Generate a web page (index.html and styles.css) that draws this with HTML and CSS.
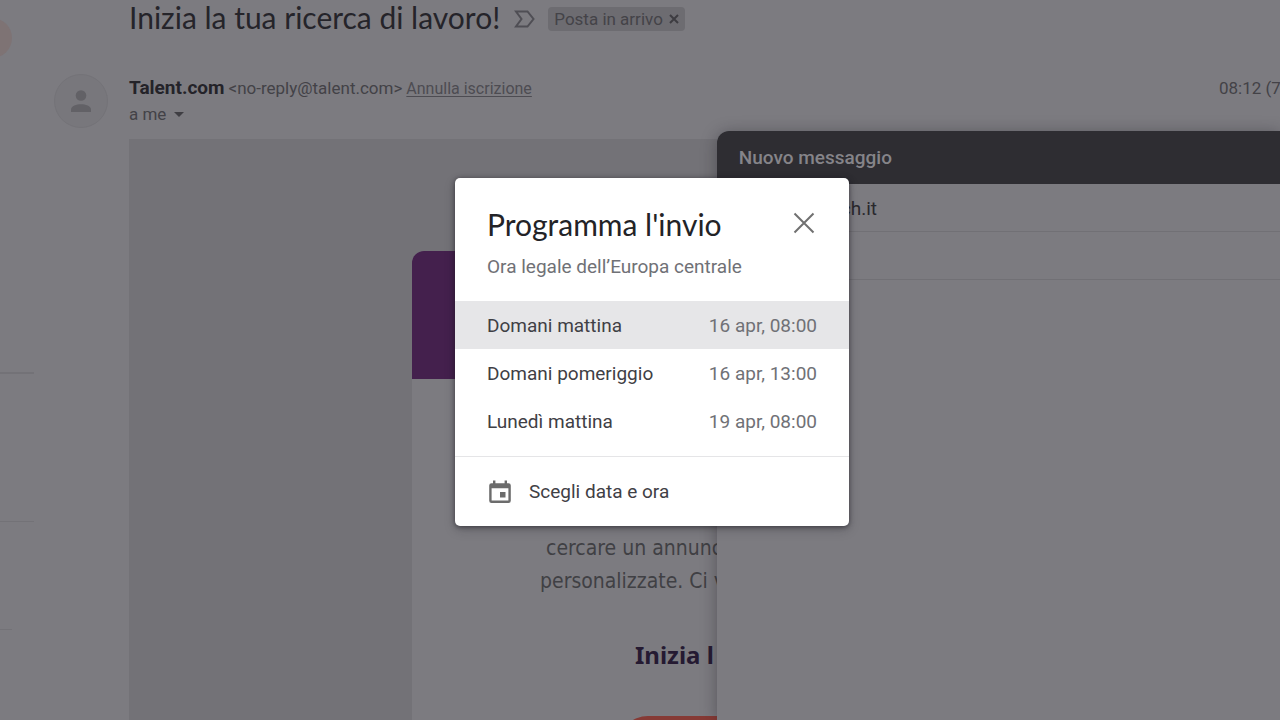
FILE: index.html
```html
<!DOCTYPE html>
<html lang="it">
<head>
<meta charset="utf-8">
<meta name="viewport" content="width=device-width, initial-scale=1">
<title>Inizia la tua ricerca di lavoro!</title>
<link rel="stylesheet" href="styles.css">
</head>
<body>
<div class="app">
  <aside class="rail">
    <span class="rail-dot"></span>
    <span class="rail-line rail-line-first"></span>
    <span class="rail-line rail-line-second"></span>
    <span class="rail-line rail-line-short"></span>
  </aside>
  <main class="thread">
    <header class="subject">
      <h1 class="subject-title">Inizia la tua ricerca di lavoro!</h1>
      <svg class="importance" viewBox="0 0 22 18" aria-hidden="true"><path d="M2 1.5h11.5l6 7.5-6 7.500H2L7.500 9z"/></svg>
      <span class="label">Posta in arrivo
        <button class="label-remove" type="button" aria-label="Rimuovi etichetta"><svg viewBox="0 0 10 10" aria-hidden="true"><path d="M1 1l8 8M9 1l-8 8"/></svg></button>
      </span>
    </header>
    <section class="message">
      <span class="avatar"><svg viewBox="0 0 20 22" aria-hidden="true"><circle cx="10" cy="5.500" r="5.300"/><path d="M0 22v-2.500C0 16 5.500 14.200 10 14.200s10 1.800 10 5.300V22z"/></svg></span>
      <div class="message-head">
        <div class="sender-row">
          <strong class="sender">Talent.com</strong>
          <span class="address">&lt;no-reply@talent.com&gt;</span>
          <a class="unsubscribe" href="#">Annulla iscrizione</a>
        </div>
        <button class="recipient" type="button">a me <svg viewBox="0 0 10 5" aria-hidden="true"><path d="M0 0h10L5 5z"/></svg></button>
      </div>
      <time class="sent">08:12 (7</time>
    </section>
    <article class="mail">
      <div class="mail-card">
        <div class="mail-banner"></div>
        <div class="mail-copy">
          <p class="mail-line">cercare un annuncio</p>
          <p class="mail-line mail-line-wide">personalizzate. Ci v</p>
          <h2 class="mail-heading">Inizia l</h2>
          <div class="mail-action"></div>
        </div>
      </div>
    </article>
  </main>
  <section class="compose" aria-label="Nuovo messaggio">
    <header class="compose-bar">Nuovo messaggio</header>
    <div class="compose-row compose-to">ch.it</div>
    <div class="compose-row"></div>
  </section>
  <div class="overlay">
    <section class="dialog" role="dialog" aria-labelledby="dialog-title">
      <header class="dialog-head">
        <div class="dialog-titles">
          <h2 class="dialog-title" id="dialog-title">Programma l'invio</h2>
          <p class="dialog-zone">Ora legale dell’Europa centrale</p>
        </div>
        <button class="close" type="button" aria-label="Chiudi"><svg viewBox="0 0 22 22" aria-hidden="true"><path d="M1.500 1.500l19 19M20.500 1.500l-19 19"/></svg></button>
      </header>
      <div class="options">
        <button class="option option-active" type="button"><span>Domani mattina</span><span class="when">16 apr, 08:00</span></button>
        <button class="option" type="button"><span>Domani pomeriggio</span><span class="when">16 apr, 13:00</span></button>
        <button class="option" type="button"><span>Lunedì mattina</span><span class="when">19 apr, 08:00</span></button>
      </div>
      <button class="pick" type="button">
        <svg viewBox="0 0 22 24" aria-hidden="true"><path fill-rule="evenodd" d="M4 0.500h2.400v2.700h9.200V0.500H18v2.700h1.500a2.300 2.300 0 0 1 2.300 2.300v15.200a2.300 2.300 0 0 1-2.300 2.300h-17a2.300 2.300 0 0 1-2.300-2.300V5.500a2.300 2.300 0 0 1 2.300-2.300H4zM2.600 8.300v12.300h16.800V8.300zM11 12h5.500v5.500H11z"/></svg>
        <span>Scegli data e ora</span>
      </button>
    </section>
  </div>
</div>
</body>
</html>
```
FILE: styles.css
```css
* { box-sizing: border-box; }
body { margin: 0; font-family: Roboto, "Liberation Sans", sans-serif; font-size: 17px; }
h1, h2, p { margin: 0; font-weight: 400; }
button { border: 0; padding: 0; background: none; font: inherit; color: inherit; text-align: left; cursor: pointer; }
svg { display: block; flex: none; }

.app { position: relative; display: flex; height: 100vh; min-height: 560px; overflow: hidden; background: #7c7b80; color: #4b4a4f; }

.rail { display: flex; flex-direction: column; flex: none; width: 54px; overflow: hidden; }
.rail-dot { flex: none; width: 40px; height: 40px; margin: 18px 0 0 -28px; border-radius: 50%; background: #7e7374; }
.rail-line { flex: none; width: 34px; height: 2px; background: #737277; }
.rail-line-first { margin-top: 314px; }
.rail-line-second { margin-top: 147px; height: 1px; }
.rail-line-short { margin-top: 107px; width: 12px; height: 1px; }

.thread { display: flex; flex: 1; flex-direction: column; min-width: 0; }
.subject { display: flex; flex: none; align-items: center; height: 38px; padding-left: 75px; }
.subject-title { padding-bottom: 4px; font-family: Lato, Roboto, sans-serif; font-size: 30px; line-height: 34px; color: #25242a; white-space: nowrap; }
.importance { width: 22px; height: 18px; margin: 0 12px 0 14px; fill: none; stroke: #4f4e54; stroke-width: 2; }
.label { display: flex; align-items: center; gap: 6px; height: 24px; padding: 0 6px; border-radius: 4px; background: #6d6c71; color: #444348; white-space: nowrap; }
.label-remove svg { width: 10px; height: 10px; fill: none; stroke: #3d3c41; stroke-width: 2; }

.message { display: flex; flex: none; align-items: flex-start; height: 101px; padding-top: 36px; }
.avatar { display: grid; place-items: center; flex: none; width: 54px; height: 54px; margin-right: 21px; border: 1px solid #747378; border-radius: 50%; background: #78777c; }
.avatar svg { width: 20px; height: 22px; fill: #626166; }
.message-head { flex: 1; min-width: 0; }
.sender-row { display: flex; align-items: baseline; gap: 4px; line-height: 28px; white-space: nowrap; }
.sender { font-size: 19px; font-weight: 700; color: #242329; }
.address, .sent { color: #434247; }
.unsubscribe { color: #4d4c52; font-size: 16px; text-underline-offset: 2px; text-decoration-thickness: 1px; }
.recipient { display: flex; align-items: center; gap: 8px; line-height: 22px; color: #434247; }
.recipient svg { width: 10px; height: 5px; fill: #3f3e43; }
.sent { flex: none; width: 61px; overflow: hidden; line-height: 28px; white-space: nowrap; }

.mail { flex: 1; min-height: 0; margin-left: 75px; padding: 112px 0 0 283px; background: #737277; }
.mail-card { height: 100%; overflow: hidden; border-radius: 12px 0 0 0; background: #7c7b80; }
.mail-banner { height: 128px; background: #44204d; }
.mail-copy { padding: 153px 0 0 128px; font-family: "DejaVu Sans Condensed", "DejaVu Sans", sans-serif; white-space: nowrap; color: #404044; }
.mail-line { padding-left: 6px; font-size: 21px; line-height: 33px; }
.mail-line-wide { padding-left: 0; }
.mail-heading { margin: 40px 0 0 95px; font-family: "Noto Sans", "DejaVu Sans", sans-serif; font-size: 24px; font-weight: 700; line-height: 34px; color: #251a32; }
.mail-action { height: 60px; margin: 44px 0 0 78px; border-radius: 30px; background: #863a35; }

.compose { position: absolute; inset: 131px 0 0 56%; border-radius: 12px 0 0 0; background: #7c7b80; box-shadow: 0 2px 16px rgba(30, 28, 36, 0.4); }
.compose-bar { height: 53px; padding-left: 22px; border-radius: 12px 0 0 0; background: #2e2d32; color: #858489; font-size: 19px; font-weight: 500; line-height: 53px; }
.compose-row { height: 48px; border-bottom: 1px solid #717075; }
.compose-to { padding-left: 124px; color: #29282d; font-size: 19px; line-height: 50px; }

.overlay { position: absolute; inset: 0; display: grid; place-content: center; padding: 0 0 16px 24px; }
.dialog { width: 394px; overflow: hidden; border-radius: 5px; background: #fff; color: #3f4045; font-size: 19px; box-shadow: 0 1px 5px rgba(25, 23, 30, 0.6), 0 4px 12px rgba(25, 23, 30, 0.2); }
.dialog-head { display: flex; align-items: flex-start; justify-content: space-between; padding: 29px 34px 20px 32px; }
.dialog-title { font-family: Lato, Roboto, sans-serif; font-size: 30px; line-height: 34px; color: #232327; white-space: nowrap; }
.dialog-zone { margin-top: 12px; line-height: 28px; color: #707176; white-space: nowrap; }
.close { margin-top: 5px; }
.close svg { width: 22px; height: 22px; fill: none; stroke: #707070; stroke-width: 2; }
.options { padding-bottom: 11px; border-bottom: 1px solid #e5e5e7; }
.option { display: flex; align-items: center; justify-content: space-between; width: 100%; height: 48px; padding: 0 32px; }
.option-active { background: #e6e6e8; }
.when { color: #707176; }
.pick { display: flex; align-items: center; gap: 18px; width: 100%; height: 69px; padding: 0 34px; }
.pick svg { width: 22px; height: 24px; fill: #6c6c6c; }
```
